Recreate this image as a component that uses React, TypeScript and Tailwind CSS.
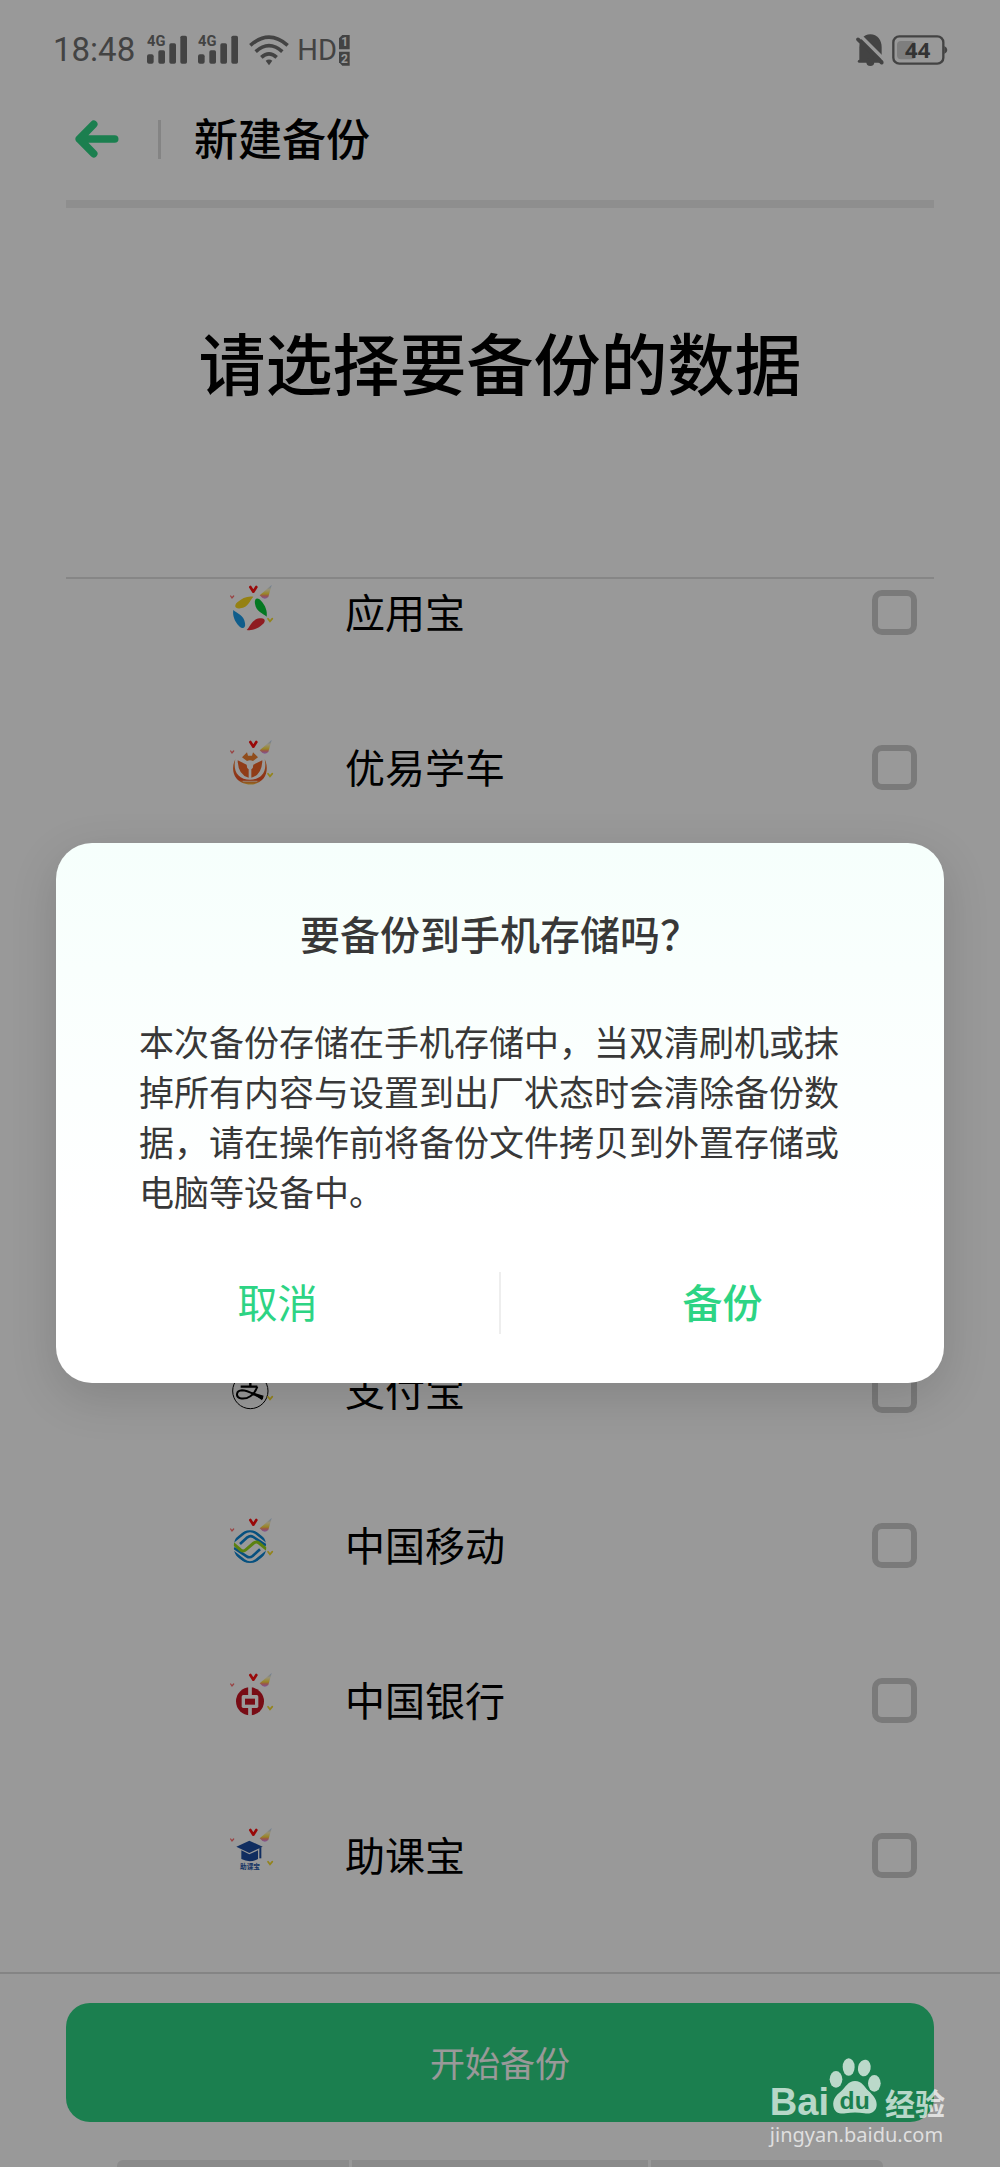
import type { ReactNode } from "react";

function SignalIcon() {
  return (
    <svg className="h-[30px] w-10 overflow-visible" viewBox="0 0 120 90" fill="currentColor">
      <text x="0" y="34" fontSize="44" fontWeight="700" fontFamily="Roboto, sans-serif">4G</text>
      <rect x="0" y="58" width="20" height="28" rx="6" />
      <rect x="34" y="46" width="20" height="40" rx="5" />
      <rect x="67" y="25" width="20" height="61" rx="5" />
      <rect x="100" y="2" width="20" height="84" rx="5" />
    </svg>
  );
}

function WifiIcon() {
  return (
    <svg className="h-[31px] w-10" viewBox="0 0 120 93" fill="none" stroke="currentColor" strokeWidth="11">
      <path d="M4 31 Q60 -18 116 31" />
      <path d="M20 50 Q60 14 100 50" />
      <path d="M37 67 Q60 46 83 67" />
      <path d="M50 77 Q60 70 70 77 L60 91 Z" fill="currentColor" stroke="none" />
    </svg>
  );
}

function SimBadge() {
  return (
    <svg className="h-[31px] w-[11px]" viewBox="0 0 33 93" fontSize="36" fontWeight="700" fontFamily="Roboto, sans-serif" textAnchor="middle">
      <path d="M10 0H32V43H0V10Z" fill="currentColor" />
      <path d="M0 50H32V92H10L0 82Z" fill="currentColor" />
      <text x="17" y="34" fill="#ffffff">1</text>
      <text x="16" y="84" fill="#ffffff">2</text>
    </svg>
  );
}

function BellOffIcon() {
  return (
    <svg className="h-8 w-7" viewBox="0 0 84 96">
      <path d="M10 82V40C10 18 22 1 43 1S77 18 77 40V82Z" fill="currentColor" />
      <path d="M10 82H77" stroke="currentColor" strokeWidth="9" strokeLinecap="round" />
      <circle cx="43" cy="84" r="12" fill="currentColor" />
      <path d="M13 5L84 76" stroke="#ffffff" strokeWidth="10" />
      <path d="M6 16L77 86" stroke="currentColor" strokeWidth="11" strokeLinecap="round" />
      <path d="M84 66V82L78 76Z" fill="#ffffff" />
    </svg>
  );
}

function BatteryIcon() {
  return (
    <svg className="h-[30px] w-[56px]" viewBox="0 0 168 90">
      <rect x="4" y="4" width="150" height="82" rx="18" fill="none" stroke="currentColor" strokeWidth="7" />
      <path d="M157 33Q166 37 166 45T157 57Z" fill="currentColor" />
      <rect x="15" y="18" width="56" height="55" rx="12" fill="#d2d2d2" />
      <text x="77" y="69" fontSize="66" fontWeight="700" fontFamily="Noto Sans, sans-serif" textAnchor="middle" fill="#555555">44</text>
    </svg>
  );
}

// theme ornaments that are laid over each app icon
function AppIcon({ children }: { children: ReactNode }) {
  return (
    <svg className="mb-[10px] h-[50px] w-[50px] shrink-0" viewBox="0 0 150 150">
      <defs>
        <linearGradient id="horn" x1="0" y1="0" x2="0" y2="1">
          <stop offset="0" stopColor="#a8c8ff" />
          <stop offset="0.35" stopColor="#fff3c0" />
          <stop offset="0.65" stopColor="#ffdf3c" />
          <stop offset="0.8" stopColor="#ff8a80" />
          <stop offset="1" stopColor="#d590ff" />
        </linearGradient>
      </defs>
      {children}
      <path d="M67 12L76 26L85 12" fill="none" stroke="#ff1010" strokeWidth="8" strokeLinejoin="round" strokeLinecap="round" />
      <path d="M8 39L12 45L17 39" fill="none" stroke="#ff7070" strokeWidth="4" strokeLinecap="round" />
      <path d="M120 107L126 115L133 107" fill="none" stroke="#f6dc30" strokeWidth="5" strokeLinecap="round" />
      <path d="M131 6L121 42Q108 54 95 37Z" fill="url(#horn)" />
    </svg>
  );
}

function YingyongbaoIcon() {
  const petal = "M81 62C78 46 89 42 99 53C112 67 119 84 116 101C106 91 84 86 81 62Z";
  return (
    <AppIcon>
      <path d={petal} fill="#08c838" />
      <path d={petal} fill="#ee3038" transform="rotate(90 66 91)" />
      <path d={petal} fill="#1c9ce8" transform="rotate(180 66 91)" />
      <path d={petal} fill="#f8d820" transform="rotate(270 66 91)" />
    </AppIcon>
  );
}

function XuecheIcon() {
  return (
    <AppIcon>
      <defs>
        <linearGradient id="wheel" x1="0" y1="0" x2="0" y2="1">
          <stop offset="0" stopColor="#f08030" />
          <stop offset="0.8" stopColor="#ee5026" />
          <stop offset="1" stopColor="#f8c040" />
        </linearGradient>
      </defs>
      <path d="M22 64C13 80 12 104 25 121C45 146 88 146 107 121C119 105 119 80 110 64C114 83 112 100 101 112C84 130 48 130 31 112C20 100 18 83 22 64Z" fill="url(#wheel)" />
      <path d="M42 58L57 43L60 53H72L75 43L90 58L75 69Q66 65 57 69Z" fill="#f08030" />
      <path d="M29 67L56 80Q56 91 62 94V119Q30 111 29 67Z" fill="#f06428" />
      <path d="M103 67L76 80Q76 91 70 94V119Q102 111 103 67Z" fill="#f06428" />
      <circle cx="66" cy="82" r="7" fill="#ffffff" />
      <path d="M44 130H88" stroke="#ffffff" strokeWidth="2" />
    </AppIcon>
  );
}

function AlipayIcon() {
  return (
    <AppIcon>
      <circle cx="67" cy="90" r="53" fill="none" stroke="#000000" strokeWidth="3" />
      <path d="M44 62H94M67 48V77M38 77H88" fill="none" stroke="#000000" strokeWidth="7" />
      <path d="M88 77C79 103 58 116 37 112C22 107 24 89 42 88C62 88 80 103 105 112" fill="none" stroke="#000000" strokeWidth="6" />
      <path d="M69 93L107 104L102 118Z" fill="#000000" />
    </AppIcon>
  );
}

function MobileIcon() {
  const outer = "M12 80L48 51Q66 38 84 51L116 76";
  const inner = "M36 84L58 64Q67 57 76 63L114 88";
  return (
    <AppIcon>
      <defs>
        <clipPath id="globe">
          <circle cx="66" cy="92" r="49" />
        </clipPath>
      </defs>
      <g clipPath="url(#globe)" fill="none" strokeWidth="8">
        <g stroke="#0b86d4">
          <path d={outer} />
          <path d={inner} />
          <path d={outer} transform="rotate(180 66 92)" />
          <path d={inner} transform="rotate(180 66 92)" />
        </g>
        <path d="M15 82L38 102Q46 108 54 101L77 81Q85 75 93 81L117 101" stroke="#98d81c" strokeWidth="9" />
      </g>
    </AppIcon>
  );
}

function BankIcon() {
  return (
    <AppIcon>
      <circle cx="66" cy="91" r="42" fill="#c81424" />
      <rect x="41" y="72" width="50" height="39" rx="5" fill="#ffffff" />
      <rect x="51" y="83" width="30" height="18" fill="#c81424" />
      <path d="M66 48V73M66 110V134" stroke="#ffffff" strokeWidth="11" />
    </AppIcon>
  );
}

function ZhukebaoIcon() {
  return (
    <AppIcon>
      <path d="M25 62L64 44L104 62L64 81Z" fill="#1c4ca0" />
      <path d="M40 73L64 85L90 73V99Q65 112 40 99Z" fill="#1c4ca0" />
      <path d="M97 64V97" stroke="#1c4ca0" strokeWidth="6" />
      <text x="66" y="129" fontSize="20" fontWeight="700" textAnchor="middle" fill="#2858a8">助课宝</text>
    </AppIcon>
  );
}

function AppRow({ icon, name }: { icon: ReactNode; name: string }) {
  return (
    <li>
      <label className="flex h-[155px] items-center pr-[17px] pl-[162px]">
        {icon}
        <span className="ml-[67px] flex-1 pb-1 text-[40px] leading-[56px] text-black">{name}</span>
        <input
          type="checkbox"
          className="h-[45px] w-[45px] appearance-none rounded-[10px] border-[6px] border-[#cbcbcb]"
        />
      </label>
    </li>
  );
}

function Watermark() {
  return (
    <div className="absolute right-[55px] bottom-[18px] text-white/70">
      <div className="flex items-baseline">
        <span className="font-['Liberation_Sans'] text-[38px] leading-[38px] font-bold">Bai</span>
        <svg className="h-[57px] w-[52px]" viewBox="0 0 156 171" fill="currentColor">
          <ellipse cx="21" cy="64" rx="19" ry="25" />
          <ellipse cx="59" cy="27" rx="18" ry="26" />
          <ellipse cx="106" cy="30" rx="19" ry="25" transform="rotate(12 106 30)" />
          <ellipse cx="136" cy="76" rx="19" ry="25" />
          <path d="M78 69C58 69 50 87 37 99C20 112 11 125 13 143C16 164 32 169 50 166C68 163 88 163 106 166C127 170 142 160 143 141C144 124 132 112 119 99C106 87 99 69 78 69Z" />
          <text x="77" y="154" fontSize="74" fontWeight="700" fontFamily="Liberation Sans, sans-serif" textAnchor="middle" fill="#1b7f4f">du</text>
        </svg>
        <span className="ml-1 text-[30px] leading-[34px] font-bold">经验</span>
      </div>
      <div className="font-['Noto_Sans'] text-[20px] leading-7">jingyan.baidu.com</div>
    </div>
  );
}

export default function App() {
  return (
    <div className="relative flex min-h-screen flex-col overflow-hidden bg-white font-['Noto_Sans_CJK_SC',sans-serif]">
      <div className="flex h-[100px] items-center pr-[52px] pl-[53px] text-[#707070]">
        <span className="font-[Roboto] text-[33px] leading-10">18:48</span>
        <div className="ml-3 flex items-center gap-[11px]">
          <SignalIcon />
          <SignalIcon />
          <WifiIcon />
        </div>
        <span className="mr-[2px] ml-2 font-[Roboto] text-[29px] leading-10">HD</span>
        <SimBadge />
        <div className="ml-auto flex items-center gap-2">
          <BellOffIcon />
          <BatteryIcon />
        </div>
      </div>

      <header className="flex h-[78px] items-center pl-[74px]">
        <button aria-label="返回" className="text-[#2dd484]">
          <svg className="h-[38px] w-[45px]" viewBox="0 0 135 114" fill="none" stroke="currentColor" strokeWidth="23" strokeLinecap="round" strokeLinejoin="round">
            <path d="M59 13L16 57L59 101M16 57H122" />
          </svg>
        </button>
        <div className="ml-[39px] h-[39px] w-[3px] bg-[#dcdcdc]" />
        <h1 className="ml-[33px] pb-1 text-[44px] leading-[60px] font-medium">新建备份</h1>
      </header>
      <div className="mx-[66px] mt-[22px] h-2 bg-[#ededed]" />

      <h2 className="pt-[113px] pb-[176px] text-center text-[67px] leading-[80px] font-medium">
        请选择要备份的数据
      </h2>

      <main className="mx-[66px] flex-1 overflow-hidden border-t-2 border-[#e0e0e0]">
        <ul className="-mt-11 pb-[39px]">
          <AppRow icon={<YingyongbaoIcon />} name="应用宝" />
          <AppRow icon={<XuecheIcon />} name="优易学车" />
          <li className="h-[468px]" aria-hidden="true" />
          <AppRow icon={<AlipayIcon />} name="支付宝" />
          <AppRow icon={<MobileIcon />} name="中国移动" />
          <AppRow icon={<BankIcon />} name="中国银行" />
          <AppRow icon={<ZhukebaoIcon />} name="助课宝" />
        </ul>
      </main>

      <footer className="border-t-2 border-[#dcdcdc] px-[66px] pt-[29px]">
        <button className="h-[119px] w-full rounded-3xl bg-[#2dd484] text-[35px] text-white">
          开始备份
        </button>
        <div className="mx-[51px] mt-[38px] flex h-[7px] gap-[3px]">
          <div className="flex-[232] rounded-tl-md bg-[#e8e8e8]" />
          <div className="flex-[296] bg-[#e8e8e8]" />
          <div className="flex-[232] rounded-tr-md bg-[#e8e8e8]" />
        </div>
      </footer>

      <div className="absolute inset-0 flex items-center justify-center bg-black/40 px-14 pt-[59px]">
        <div
          role="dialog"
          aria-labelledby="dialog-title"
          className="flex w-full flex-col rounded-[36px] bg-linear-to-b from-[#f6fffc] to-white to-70% pt-[60px] pb-10 text-[#383838] shadow-[0_14px_48px_rgba(0,0,0,0.14)]"
        >
          <h3 id="dialog-title" className="text-center text-[40px] leading-[60px] font-medium">
            要备份到手机存储吗？
          </h3>
          <p className="mt-[53px] pr-[88px] pl-[83px] text-[35px] leading-[50px]">
            本次备份存储在手机存储中，当双清刷机或抹掉所有内容与设置到出厂状态时会清除备份数据，请在操作前将备份文件拷贝到外置存储或电脑等设备中。
          </p>
          <div className="mt-[47px] flex h-20 items-center text-[40px] text-[#2dd484]">
            <button className="flex-1 pb-1">取消</button>
            <div className="h-[62px] w-[2px] bg-[#eeeeee]" />
            <button className="flex-1 pb-1 font-medium">备份</button>
          </div>
        </div>
      </div>

      <Watermark />
    </div>
  );
}
